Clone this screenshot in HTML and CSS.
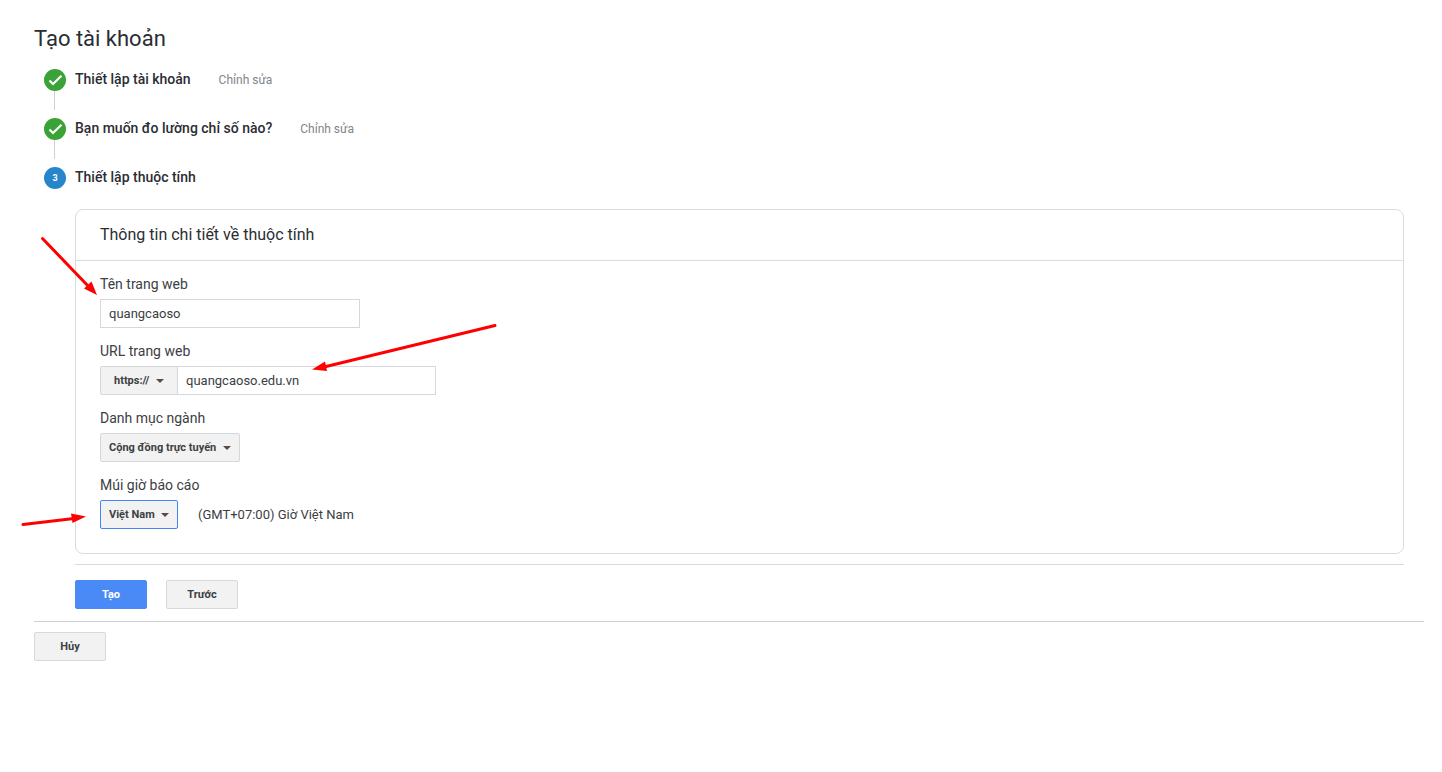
FILE: index.html
```html
<!DOCTYPE html>
<html lang="vi">
<head>
    <meta charset="UTF-8">
    <meta name="viewport" content="width=device-width, initial-scale=1.0">
    <title>Tạo tài khoản</title>
    <link rel="stylesheet" href="styles.css">
</head>
<body>
    <main class="page">
        <h1 class="page-title">Tạo tài khoản</h1>

        <ol class="steps">
            <li class="step">
                <svg class="step-icon" viewBox="0 0 22 22" aria-hidden="true">
                    <circle cx="11" cy="11" r="11" fill="#3aa236"/>
                    <path d="M5.500 11.500L9 15L17.500 6.800" fill="none" stroke="#fff" stroke-width="2.200"/>
                </svg>
                <h2 class="step-title">Thiết lập tài khoản</h2>
                <a class="step-edit" href="#">Chỉnh sửa</a>
            </li>
            <li class="step">
                <svg class="step-icon" viewBox="0 0 22 22" aria-hidden="true">
                    <circle cx="11" cy="11" r="11" fill="#3aa236"/>
                    <path d="M5.500 11.500L9 15L17.500 6.800" fill="none" stroke="#fff" stroke-width="2.200"/>
                </svg>
                <h2 class="step-title">Bạn muốn đo lường chỉ số nào?</h2>
                <a class="step-edit" href="#">Chỉnh sửa</a>
            </li>
            <li class="step">
                <span class="step-icon step-number">3</span>
                <h2 class="step-title">Thiết lập thuộc tính</h2>
            </li>
        </ol>

        <form class="step-body">
            <section class="card">
                <h3 class="card-title">Thông tin chi tiết về thuộc tính</h3>
                <div class="card-content">
                    <div class="field">
                        <label for="site-name">Tên trang web</label>
                        <input class="text-input" id="site-name" type="text" value="quangcaoso">
                    </div>
                    <div class="field">
                        <label for="site-url">URL trang web</label>
                        <div class="field-row">
                            <div class="dropdown dropdown-protocol">
                                <select aria-label="Giao thức">
                                    <option>https://</option>
                                </select>
                                <svg class="caret" viewBox="0 0 8 4" aria-hidden="true"><path d="M0 0h8L4 4z"/></svg>
                            </div>
                            <input class="text-input url-input" id="site-url" type="text" value="quangcaoso.edu.vn">
                        </div>
                    </div>
                    <div class="field">
                        <label for="category">Danh mục ngành</label>
                        <div class="dropdown">
                            <select id="category">
                                <option>Cộng đồng trực tuyến</option>
                            </select>
                            <svg class="caret" viewBox="0 0 8 4" aria-hidden="true"><path d="M0 0h8L4 4z"/></svg>
                        </div>
                    </div>
                    <div class="field">
                        <label for="timezone">Múi giờ báo cáo</label>
                        <div class="field-row">
                            <div class="dropdown dropdown-active">
                                <select id="timezone">
                                    <option>Việt Nam</option>
                                </select>
                                <svg class="caret" viewBox="0 0 8 4" aria-hidden="true"><path d="M0 0h8L4 4z"/></svg>
                            </div>
                            <span class="timezone-text">(GMT+07:00) Giờ Việt Nam</span>
                        </div>
                    </div>
                </div>
            </section>

            <div class="actions">
                <button class="button button-primary" type="submit">Tạo</button>
                <button class="button" type="button">Trước</button>
            </div>
        </form>

        <div class="page-footer">
            <button class="button" type="button">Hủy</button>
        </div>

        <!-- red arrows pointing at the fields to fill in -->
        <svg class="arrows" viewBox="0 0 500 540" aria-hidden="true">
            <g stroke="#f00" stroke-width="3" stroke-linecap="round">
                <path d="M42.500 238.500L90 288"/>
                <path d="M495 325.500L324 367"/>
                <path d="M23 524.500L74 518.500"/>
            </g>
            <g fill="#f00">
                <path d="M97 295L84 288.500L91.500 281.500z"/>
                <path d="M312 369.500L325 361.500L327 371z"/>
                <path d="M86 516.500L71 513.500L72.500 523z"/>
            </g>
        </svg>
    </main>
</body>
</html>
```

FILE: styles.css
```css
* {
    box-sizing: border-box;
}
body {
    margin: 0;
    background: white;
    color: #3c4043;
    font-family: Roboto, "Noto Sans", sans-serif;
    font-size: 14px;
}
.page {
    position: relative;
    padding: 25px 18px 24px 34px;
}
h1, h2, h3 {
    margin: 0;
    font-weight: 400;
    color: #2b2d33;
}
.page-title {
    font-size: 22px;
    line-height: 28px;
}
.steps {
    list-style: none;
    margin: 16px 0 0;
    padding: 0 0 0 10px;
}
.step {
    display: flex;
    height: 49px;
    line-height: 22px;
    background: linear-gradient(#d0d0d0, #d0d0d0) 10px 22px / 1px 19px no-repeat;
}
.step:last-child {
    height: 22px;
    background: none;
}
.step-icon {
    width: 22px;
    height: 22px;
    flex: none;
    margin-right: 9px;
}
.step-number {
    border-radius: 50%;
    background: #2786cb;
    color: white;
    font-size: 9px;
    font-weight: 700;
    text-align: center;
}
.step-title {
    font-size: 14px;
    line-height: 20px;
    font-weight: 500;
}
.step-edit {
    margin-left: 28px;
    color: #80868b;
    font-size: 12px;
    text-decoration: none;
}
.step-edit:hover {
    text-decoration: underline;
}
.step-body {
    margin: 20px 20px 0 41px;
}
.card {
    border: 1px solid #dadce0;
    border-radius: 8px;
}
.card-title {
    padding: 0 24px;
    border-bottom: 1px solid #dadce0;
    font-size: 16px;
    line-height: 50px;
}
.card-content {
    display: flex;
    flex-direction: column;
    gap: 14px;
    padding: 14px 24px 24px;
}
.field {
    display: flex;
    flex-direction: column;
    align-items: flex-start;
    gap: 6px;
}
.field label {
    line-height: 18px;
}
.field-row {
    display: flex;
    align-items: center;
}
.text-input {
    width: 260px;
    height: 29px;
    padding: 0 8px;
    border: 1px solid #d5d7da;
    background: white;
    color: #3c4043;
    font: inherit;
    font-size: 13px;
}
.url-input {
    width: 258px;
    border-left: none;
}
.dropdown {
    position: relative;
}
.dropdown select {
    display: block;
    height: 29px;
    padding: 0 22px 0 8px;
    border: 1px solid #d5d7da;
    border-radius: 2px;
    background: #f2f2f2;
    color: #3c4043;
    font: inherit;
    font-size: 11px;
    font-weight: 700;
    appearance: none;
}
.dropdown-protocol select {
    padding: 0 27px 0 13px;
    border-radius: 2px 0 0 2px;
}
.dropdown-active select {
    border-color: #4285f4;
}
.caret {
    position: absolute;
    top: 13px;
    right: 9px;
    width: 8px;
    height: 4px;
    fill: #5a4a42;
    pointer-events: none;
}
.dropdown-protocol .caret {
    right: 14px;
}
.timezone-text {
    margin-left: 20px;
    font-size: 13px;
}
.actions {
    display: flex;
    gap: 19px;
    margin-top: 10px;
    padding: 15px 0 12px;
    border-top: 1px solid #dadada;
}
.button {
    min-width: 72px;
    height: 29px;
    padding: 0 8px;
    border: 1px solid #d8d8d8;
    border-radius: 2px;
    background: #f2f2f2;
    color: #3c4043;
    font: inherit;
    font-size: 11px;
    font-weight: 700;
    cursor: pointer;
}
.button-primary {
    border-color: #4a8af6;
    background: #4a8af6;
    color: white;
}
.page-footer {
    padding-top: 10px;
    border-top: 1px solid #d0d0d0;
}
.arrows {
    position: absolute;
    top: 0;
    left: 0;
    width: 500px;
    height: 540px;
    pointer-events: none;
}
```
